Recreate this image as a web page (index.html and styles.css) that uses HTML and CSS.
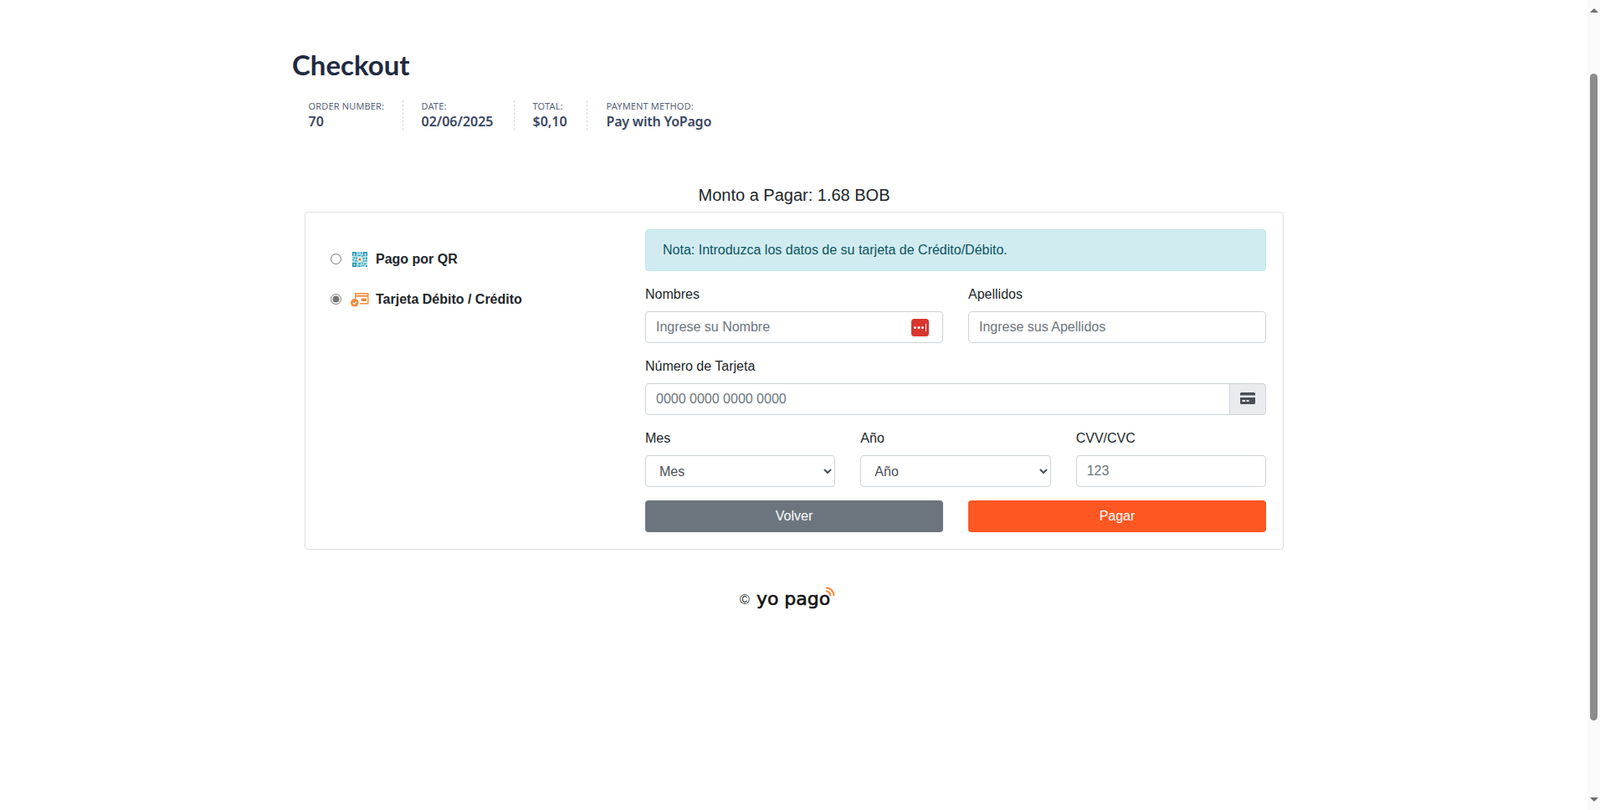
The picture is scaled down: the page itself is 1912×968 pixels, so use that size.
FILE: index.html
```html
<!DOCTYPE html>
<html lang="es">
<head>
    <meta charset="UTF-8">
    <meta name="viewport" content="width=device-width, initial-scale=1.0">
    <title>Checkout</title>
    <link rel="stylesheet" href="styles.css">
</head>
<body>
    <div class="page">
        <h1 class="title">Checkout</h1>
        <ul class="order-meta">
            <li class="meta-item meta-order"><span class="meta-label">ORDER NUMBER:</span><strong class="meta-value">70</strong></li>
            <li class="meta-item meta-date"><span class="meta-label">DATE:</span><strong class="meta-value">02/06/2025</strong></li>
            <li class="meta-item meta-total"><span class="meta-label">TOTAL:</span><strong class="meta-value">$0,10</strong></li>
            <li class="meta-item meta-method"><span class="meta-label">PAYMENT METHOD:</span><strong class="meta-value">Pay with YoPago</strong></li>
        </ul>

        <h4 class="amount">Monto a Pagar: 1.68 BOB</h4>
        <div class="card">
            <div class="methods">
                <label class="method">
                    <input type="radio" name="method">
                    <svg class="method-icon" viewBox="0 0 20 20" width="20" height="20">
                        <rect x="1" y="1" width="18" height="18" fill="#b5e0e8"/>
                        <path d="M1 1h5v1.500H1zM1 2.500h1.500V6H1zM4.500 2.500H6V6H4.500zM14 1h5v1.500h-5zM14 2.500h1.500V6H14zM17.500 2.500H19V6h-1.500zM1 14h5v1.500H1zM1 15.500h1.500V19H1zM4.500 15.500H6V19H4.500zM2.500 17.500h2V19h-2z" fill="#2596b4"/>
                        <path d="M7.500 1.500h2V3h-2zM11 1h1.500v2.500H11zM7.500 4.500H11V6H7.500zM12 5h1.500v2H12zM2 7.500h2.500V9H2zM5.500 7h1.500v3H5.500zM1 10h2v1.500H1zM4 11h3.500v1.500H4zM13.500 8h2.500v1.500h-2.500zM17 7.500h2V10h-2zM14 11h1.500v2H14zM16.500 11h2.500v1.500h-2.500zM8 14.500h3V16H8zM12 13.500h1.500v2H12zM15 14.500h2.500V16H15zM13.500 16.500h2V18h-2zM17 17h2v2h-2zM7.500 17h3v2h-3zM11.500 17h1v2h-1z" fill="#3fa9c2"/>
                        <circle cx="10" cy="10" r="3" fill="#f6f3ee"/>
                        <circle cx="10" cy="10" r="1.500" fill="#b9703f"/>
                    </svg>
                    <span>Pago por QR</span>
                </label>
                <label class="method">
                    <input type="radio" name="method" checked>
                    <svg class="method-icon" viewBox="0 0 22 18" width="22" height="18">
                        <path d="M5.800 8V1.800h15v12H11" fill="none" stroke="#f58a3c" stroke-width="1.400"/>
                        <path d="M5.500 4.700h15.500" stroke="#f58a3c" stroke-width="2"/>
                        <path d="M12.500 7.500h6.500v3.500h-6.500z" fill="#f58a3c"/>
                        <circle cx="4.800" cy="12.800" r="4.800" fill="#f58a3c"/>
                        <path d="M2.700 12.800l1.500 1.600 2.900-3" fill="none" stroke="#fff" stroke-width="1.100"/>
                    </svg>
                    <span>Tarjeta Débito / Crédito</span>
                </label>
            </div>

            <form class="card-form">
                <div class="alert">Nota: Introduzca los datos de su tarjeta de Crédito/Débito.</div>
                <div class="form-row two">
                    <div class="field">
                        <label for="nombres">Nombres</label>
                        <div class="input-wrap">
                            <input class="control" id="nombres" type="text" placeholder="Ingrese su Nombre">
                            <svg class="pass-icon" viewBox="0 0 21 21" width="21" height="21">
                                <rect width="21" height="21" rx="3.500" fill="#d8352f"/>
                                <circle cx="4.500" cy="10.500" r="1.500" fill="#fff"/>
                                <circle cx="9" cy="10.500" r="1.500" fill="#fff"/>
                                <circle cx="13.500" cy="10.500" r="1.500" fill="#fff"/>
                                <rect x="17" y="6" width="1" height="9" fill="#fff"/>
                            </svg>
                        </div>
                    </div>
                    <div class="field">
                        <label for="apellidos">Apellidos</label>
                        <input class="control" id="apellidos" type="text" placeholder="Ingrese sus Apellidos">
                    </div>
                </div>
                <div class="field">
                    <label for="numero">Número de Tarjeta</label>
                    <div class="input-group">
                        <input class="control" id="numero" type="text" placeholder="0000 0000 0000 0000">
                        <span class="input-append">
                            <svg class="append-icon" viewBox="0 0 18 14" width="18" height="14">
                                <path d="M0 1.500A1.500 1.500 0 0 1 1.500 0h15A1.500 1.500 0 0 1 18 1.500V3.500H0z" fill="#495057"/>
                                <path d="M0 6h18v6.500a1.500 1.500 0 0 1-1.500 1.500h-15A1.500 1.500 0 0 1 0 12.500zm2.500 3v2h3.500V9zm5 0v2h3V9z" fill="#495057" fill-rule="evenodd"/>
                            </svg>
                        </span>
                    </div>
                </div>
                <div class="form-row three">
                    <div class="field">
                        <label for="mes">Mes</label>
                        <select class="control" id="mes"><option>Mes</option></select>
                    </div>
                    <div class="field">
                        <label for="anio">Año</label>
                        <select class="control" id="anio"><option>Año</option></select>
                    </div>
                    <div class="field">
                        <label for="cvv">CVV/CVC</label>
                        <input class="control" id="cvv" type="text" placeholder="123">
                    </div>
                </div>
                <div class="form-row two buttons">
                    <button class="btn btn-back" type="button">Volver</button>
                    <button class="btn btn-pay" type="button">Pagar</button>
                </div>
            </form>
        </div>

        <footer class="footer">
            <span class="copy">©</span>
            <span class="logo">
                <span class="logo-text">yo pago</span>
                <svg class="logo-signal" viewBox="0 0 12 12" width="12" height="12">
                    <path d="M1 1.500a9.500 9.500 0 0 1 9.500 9.500M1 5.500a5.500 5.500 0 0 1 5.500 5.500" fill="none" stroke="#f58a3c" stroke-width="2.200"/>
                </svg>
            </span>
        </footer>
    </div>

    <div class="scrollbar">
        <span class="arrow arrow-up"></span>
        <span class="thumb"></span>
        <span class="arrow arrow-down"></span>
    </div>
</body>
</html>
```

FILE: styles.css
```css
html, body {
    margin: 0;
    padding: 0;
}
body {
    padding-right: 14px;
    font-family: "Liberation Sans", Arial, sans-serif;
    font-size: 16px;
    line-height: 1.5;
    color: #212529;
    background-color: #fff;
}
.page {
    width: 1170px;
    margin: 0 auto;
    padding-top: 53px;
}
.title {
    margin: 0 0 0 -15px;
    font-family: Lato, sans-serif;
    font-size: 33px;
    font-weight: 700;
    line-height: 48px;
    color: #1f2a40;
}
.order-meta {
    display: flex;
    list-style: none;
    margin: 19px 0 0;
    padding: 0 0 0 4.500px;
}
.meta-item {
    display: flex;
    flex-direction: column;
    height: 36px;
    padding-right: 22px;
    margin-right: 22px;
    border-right: 1px dashed #d5d8dd;
}
.meta-item:last-child {
    border-right: none;
}
.meta-order { width: 90px; }
.meta-date { width: 88px; }
.meta-total { width: 42px; }
.meta-method { width: 150px; margin-left: 1px; }
.meta-label {
    font-family: "Noto Sans", sans-serif;
    font-size: 11px;
    letter-spacing: 0.15px;
    line-height: 14px;
    color: #5a6376;
    white-space: nowrap;
}
.meta-value {
    font-family: "Noto Sans", sans-serif;
    font-size: 16px;
    font-weight: 600;
    line-height: 22px;
    color: #3a4660;
    white-space: nowrap;
}
.meta-method .meta-value {
    letter-spacing: -0.2px;
}
.amount {
    margin: 65px 0 8px;
    font-size: 20px;
    font-weight: 400;
    line-height: 24px;
    text-align: center;
}
.card {
    display: grid;
    grid-template-columns: 356px 742px;
    column-gap: 30px;
    padding: 20px;
    border: 1px solid #dfdfdf;
    border-radius: 4px;
}
.methods {
    display: flex;
    flex-direction: column;
    padding: 12px 0 0 10px;
}
.method {
    display: flex;
    align-items: center;
    height: 48px;
    font-weight: bold;
}
.method input {
    width: 13px;
    height: 13px;
    margin: 0 12px 2px 0;
    accent-color: #757575;
}
.method-icon {
    margin-right: 9px;
}
.method input:checked + .method-icon {
    margin-left: -1px;
    margin-right: 8px;
}
.alert {
    padding: 12px 20px;
    margin-bottom: 16px;
    color: #0c5460;
    background-color: #d1ecf1;
    border: 1px solid #bee5eb;
    border-radius: 4px;
}
.form-row {
    display: grid;
    column-gap: 30px;
}
.form-row.two {
    grid-template-columns: 1fr 1fr;
}
.form-row.three {
    grid-template-columns: 1fr 1fr 1fr;
}
.field {
    margin-bottom: 16px;
}
.field label {
    display: block;
    margin-bottom: 8px;
}
.control {
    display: block;
    width: 100%;
    height: 38px;
    padding: 6px 12px;
    box-sizing: border-box;
    font-family: inherit;
    font-size: 16px;
    color: #495057;
    background-color: #fff;
    border: 1px solid #ced4da;
    border-radius: 4px;
}
.control::placeholder {
    color: #6c757d;
}
.input-wrap {
    position: relative;
}
.pass-icon {
    position: absolute;
    top: 9px;
    right: 17px;
}
.input-group {
    display: flex;
}
.input-group .control {
    flex: 1;
    border-radius: 4px 0 0 4px;
}
.input-append {
    display: flex;
    align-items: center;
    justify-content: center;
    width: 44px;
    box-sizing: border-box;
    margin-left: -1px;
    background-color: #e9ecef;
    border: 1px solid #ced4da;
    border-radius: 0 4px 4px 0;
}
.append-icon {
    margin-bottom: 2px;
}
.btn {
    height: 38px;
    font-family: inherit;
    font-size: 16px;
    color: #fff;
    border: 1px solid transparent;
    border-radius: 4px;
}
.btn-back {
    background-color: #6c757d;
}
.btn-pay {
    background-color: #ff5722;
}
.footer {
    display: flex;
    align-items: center;
    justify-content: center;
    margin-top: 42px;
    height: 36px;
    padding-right: 16px;
}
.copy {
    margin-right: 8px;
}
.logo {
    position: relative;
    display: inline-block;
    width: 94px;
}
.logo-text {
    font-family: "DejaVu Sans", sans-serif;
    font-size: 22px;
    line-height: 24px;
    -webkit-text-stroke: 0.6px #111;
    color: #111;
}
.logo-signal {
    position: absolute;
    top: -3px;
    right: 0;
}
.scrollbar {
    position: fixed;
    top: 0;
    right: 0;
    bottom: 0;
    width: 15px;
    background-color: #fafafa;
    display: flex;
    flex-direction: column;
    align-items: center;
}
.arrow {
    width: 0;
    height: 0;
    border-left: 5px solid transparent;
    border-right: 5px solid transparent;
}
.arrow-up {
    margin-top: 10px;
    border-bottom: 5px solid #6e6e6e;
}
.thumb {
    width: 9px;
    height: 773px;
    margin: 73px 0 auto;
    background-color: #8c8c8c;
    border-radius: 5px;
}
.arrow-down {
    margin-bottom: 10px;
    border-top: 5px solid #6e6e6e;
}
```
